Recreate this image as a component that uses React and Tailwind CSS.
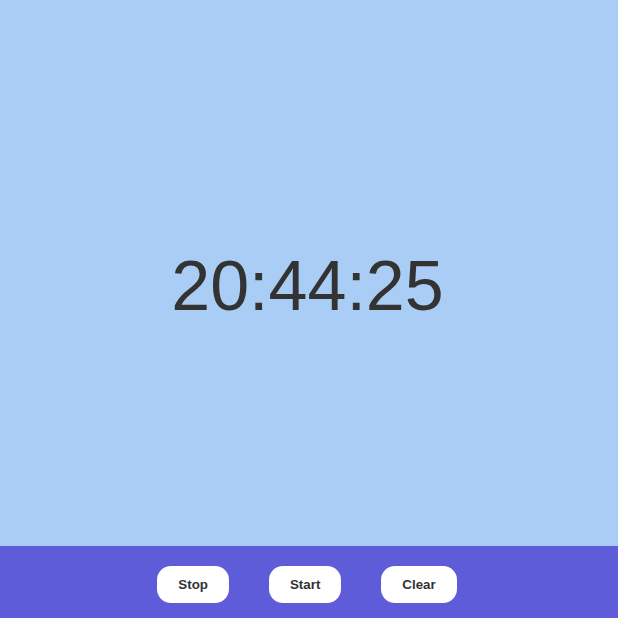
import React from 'react';

const App = () => {
  const time = '20:44:25';
  const buttons = ['Stop', 'Start', 'Clear'];

  return (
    <div className="flex h-[618px] w-full flex-col font-['Liberation_Sans',Arial,sans-serif]">
      {/* clock face */}
      <div className="flex flex-1 items-center justify-center bg-[#a9cdf4] pt-[26px]">
        <div className="pr-[3px] text-[70px] text-[#333333]">{time}</div>
      </div>

      {/* controls */}
      <div className="flex h-[72px] items-center justify-center gap-10 bg-[#5f5cd9] pt-[5px] pr-[4px]">
        {buttons.map((label) => (
          <button
            key={label}
            className="h-[37px] rounded-[14px] bg-white px-[21px] text-[13.33px] font-bold text-[#333333]"
          >
            {label}
          </button>
        ))}
      </div>
    </div>
  );
};

export default App;
